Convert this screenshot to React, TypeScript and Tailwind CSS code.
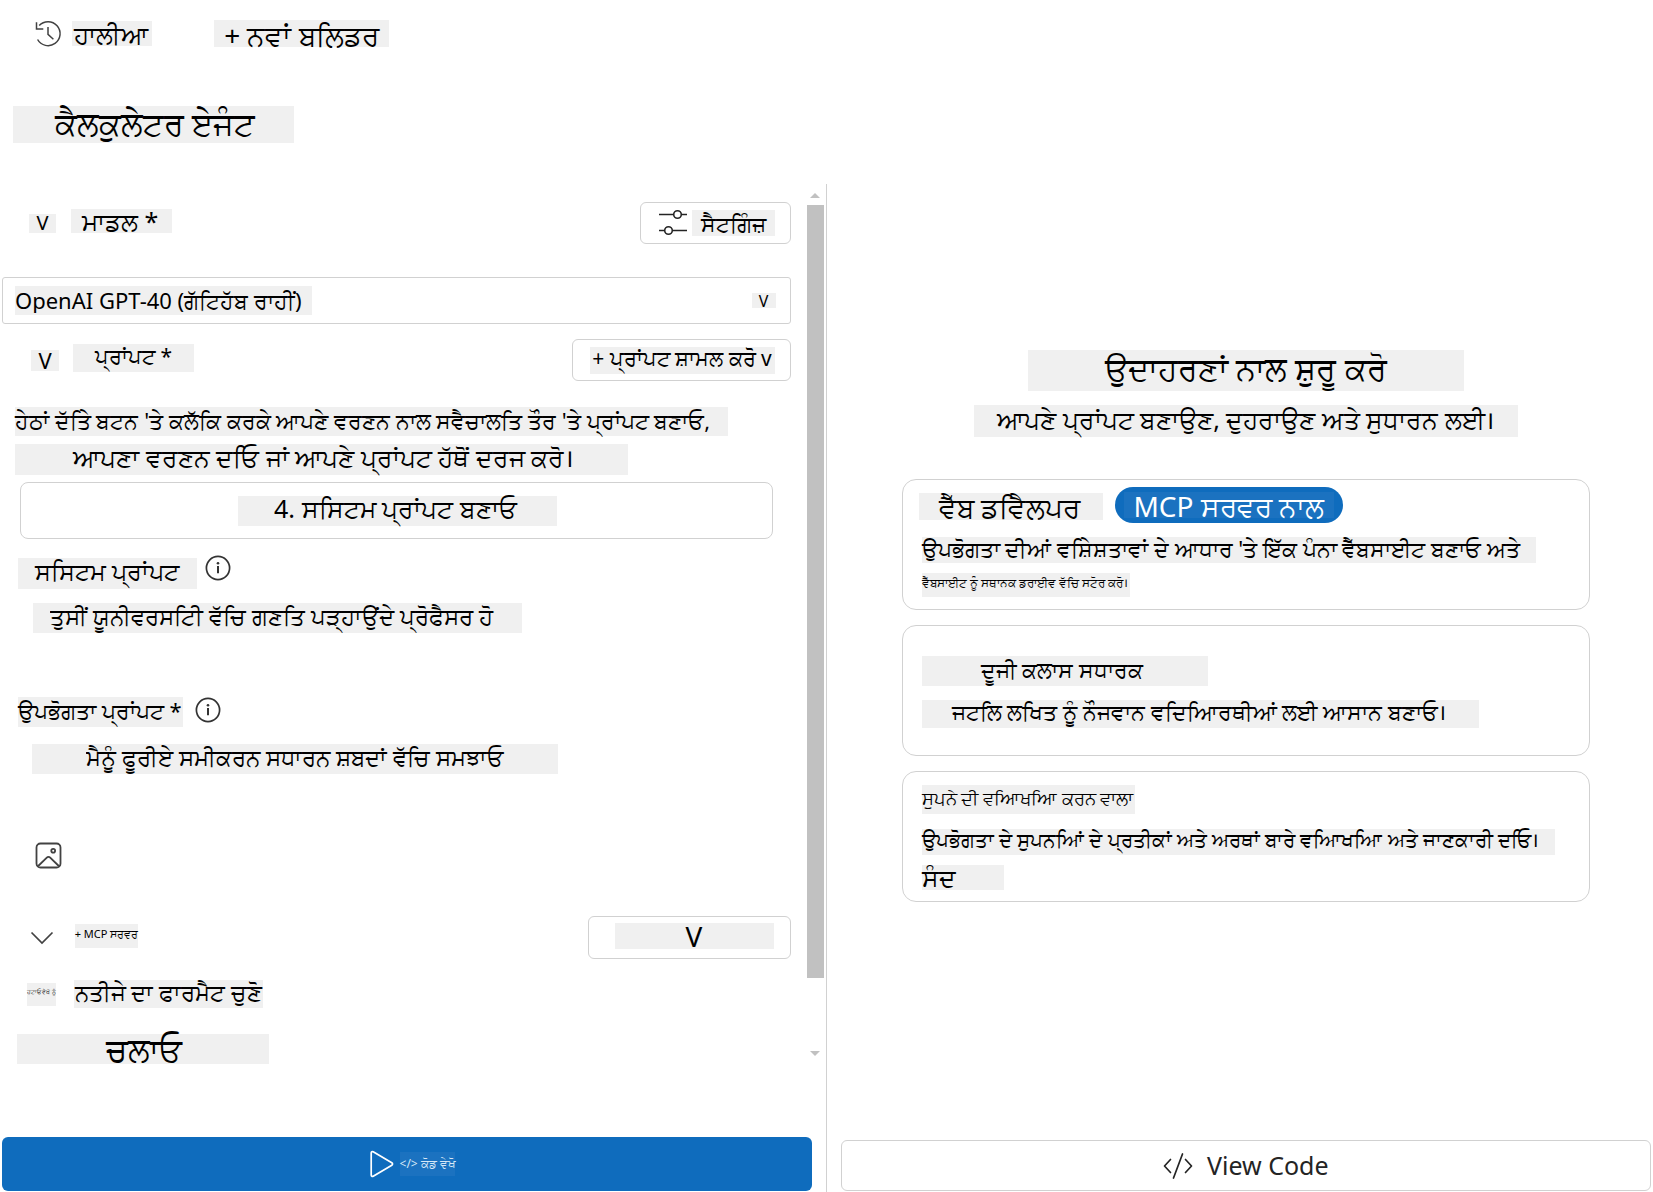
import type { ReactNode } from 'react';

function Chip({ className = '', children }: { className?: string; children: ReactNode }) {
  return (
    <span className={`flex shrink-0 items-center whitespace-nowrap bg-[#f0f0f0] pb-1 leading-none ${className}`}>
      {children}
    </span>
  );
}

function HistoryIcon() {
  return (
    <svg className="h-7 w-7 shrink-0" viewBox="0 0 28 28" fill="none" stroke="#424242" strokeWidth="1.5" aria-hidden="true">
      <path d="M5.200 5.600A12 12 0 1 1 3.600 19.500" />
      <path d="M2.500 2.200v6.800h6.800" />
      <path d="M14 7v7.400l5.400 4.800" />
    </svg>
  );
}

function SlidersIcon() {
  return (
    <svg className="h-7 w-7 shrink-0" viewBox="0 0 28 28" fill="none" stroke="#242424" strokeWidth="1.6" aria-hidden="true">
      <path d="M0 5.5h14.5M22.5 5.5H28M0 21.5h5.5M13.5 21.5H28" />
      <circle cx="18.5" cy="5.5" r="3.8" />
      <circle cx="9.5" cy="21.5" r="3.8" />
    </svg>
  );
}

function InfoIcon() {
  return (
    <svg className="h-[26px] w-[26px] shrink-0" viewBox="0 0 26 26" fill="none" stroke="#333" strokeWidth="1.7" aria-hidden="true">
      <circle cx="13" cy="13" r="11.6" />
      <path d="M13 11v7.200" strokeWidth="2" />
      <circle cx="13" cy="8.2" r="1.3" fill="#333" stroke="none" />
    </svg>
  );
}

function ImageIcon() {
  return (
    <svg className="h-[27px] w-[27px]" viewBox="0 0 27 27" fill="none" stroke="#424242" strokeWidth="1.8" aria-hidden="true">
      <rect x="1.5" y="1.5" width="24" height="24" rx="4" />
      <path d="M3.2 24l8.6-8.4a2.4 2.4 0 0 1 3.4 0l8.6 8.4" />
      <circle cx="18.2" cy="8.8" r="1.9" />
    </svg>
  );
}

function PlayIcon() {
  return (
    <svg className="h-7 w-6 shrink-0" viewBox="0 0 24 28" fill="none" stroke="#fff" strokeWidth="1.7" strokeLinejoin="round" aria-hidden="true">
      <path d="M1.2 3v22c0 1.2 1 1.8 2 1.2l18.6-11c1-.6 1-1.8 0-2.400L3.200 1.800c-1-.6-2 0-2 1.200z" />
    </svg>
  );
}

function CodeIcon() {
  return (
    <svg className="h-7 w-[30px] shrink-0" viewBox="0 0 30 28" fill="none" stroke="#242424" strokeWidth="1.7" strokeLinecap="round" strokeLinejoin="round" aria-hidden="true">
      <path d="M7.500 7.500L1.500 14l6 6.500M22.500 7.500l6 6.500-6 6.500M19.500 2l-9 24" />
    </svg>
  );
}

function Scrollbar() {
  return (
    <div className="mt-[9px] flex h-[863px] w-[17px] shrink-0 flex-col items-center" aria-hidden="true">
      <svg className="h-[5px] w-[10px]" viewBox="0 0 10 5" fill="#c1c1c1"><path d="M0 5l5-5 5 5z" /></svg>
      <div className="mt-[7px] h-[773px] w-full bg-[#c1c1c1]" />
      <svg className="mt-auto h-[5px] w-[10px]" viewBox="0 0 10 5" fill="#c1c1c1"><path d="M0 0l5 5 5-5z" /></svg>
    </div>
  );
}

function ExampleCard({ children }: { children: ReactNode }) {
  return <article className="h-[131px] rounded-[14px] border border-[#d1d1d1] px-[19px]">{children}</article>;
}

function BuilderForm() {
  return (
    <form className="min-w-0 flex-1" onSubmit={(e) => e.preventDefault()}>
      <div className="mt-[18px] flex h-[42px] items-center">
        <button type="button" className="ml-[27px]"><Chip className="h-[19px] w-[27px] justify-center pt-1 text-xl">V</Chip></button>
        <label htmlFor="model" className="ml-[15px]"><Chip className="mb-1 h-6 w-[101px] pt-1 pl-[11px] text-[25px]">ਮਾਡਲ *</Chip></label>
        <button type="button" className="ml-auto flex h-[42px] w-[151px] items-center rounded-md border border-[#d1d1d1] pl-[18px]">
          <SlidersIcon />
          <Chip className="ml-[5px] h-[26px] w-[83px] justify-center pt-1 text-[22px]">ਸੈਟਗਿੰਜ਼</Chip>
        </button>
      </div>

      <div className="mt-[33px] flex h-[47px] items-center rounded-[3px] border border-[#d1d1d1] pr-[14px] pl-3">
        <select id="model" className="h-[29px] w-[297px] appearance-none bg-[#f0f0f0] pb-0.5 text-[22px] leading-7">
          <option>OpenAI GPT-40 (ਗੱਟਿਹੱਬ ਰਾਹੀਂ)</option>
        </select>
        <Chip className="ml-auto h-[15px] w-6 justify-center pt-1 text-base">V</Chip>
      </div>

      <div className="mt-[15px] flex h-[42px] items-center">
        <button type="button" className="ml-[29px]"><Chip className="h-[21px] w-7 justify-center pt-1 text-[22px]">V</Chip></button>
        <Chip className="mb-1 ml-[14px] h-7 w-[121px] pl-[22px] text-[21px]">ਪ੍ਰਾਂਪਟ *</Chip>
        <button type="button" className="ml-auto flex h-[42px] w-[219px] items-center rounded-md border border-[#d1d1d1] pl-[17px]">
          <Chip className="h-[27px] w-[185px] justify-center text-[21px]">+ ਪ੍ਰਾਂਪਟ ਸ਼ਾਮਲ ਕਰੋ v</Chip>
        </button>
      </div>

      <p className="mt-[26px] ml-[13px]">
        <Chip className="h-[29px] w-[713px] text-[22px]">ਹੇਠਾਂ ਦੱਤੇਿ ਬਟਨ 'ਤੇ ਕਲੱਕਿ ਕਰਕੇ ਆਪਣੇ ਵਰਣਨ ਨਾਲ ਸਵੈਚਾਲਤਿ ਤੌਰ 'ਤੇ ਪ੍ਰਾਂਪਟ ਬਣਾਓ,</Chip>
        <Chip className="mt-2 h-[31px] w-[613px] pl-[58px] text-[25px]">ਆਪਣਾ ਵਰਣਨ ਦਓਿ ਜਾਂ ਆਪਣੇ ਪ੍ਰਾਂਪਟ ਹੱਥੋਂ ਦਰਜ ਕਰੋ।</Chip>
      </p>

      <button type="button" className="mt-[7px] ml-[18px] flex h-[57px] w-[753px] items-center justify-center rounded-lg border border-[#d1d1d1]">
        <Chip className="ml-0.5 h-[30px] w-[319px] pl-9 text-[25px]">4. ਸਸਿਟਮ ਪ੍ਰਾਂਪਟ ਬਣਾਓ</Chip>
      </button>

      <div className="mt-4 ml-4 flex h-[34px]">
        <label htmlFor="system"><Chip className="mt-[3px] h-[31px] w-[179px] pb-1.5 pl-[17px] text-2xl">ਸਸਿਟਮ ਪ੍ਰਾਂਪਟ</Chip></label>
        <button type="button" aria-label="info" className="ml-2 h-[26px]"><InfoIcon /></button>
      </div>
      <input id="system" className="mt-[14px] ml-[31px] block h-[30px] w-[489px] bg-[#f0f0f0] pb-1 pl-[17px] text-[23px] outline-none" defaultValue="ਤੁਸੀਂ ਯੂਨੀਵਰਸਟਿੀ ਵੱਚਿ ਗਣਤਿ ਪੜ੍ਹਾਉਂਦੇ ਪ੍ਰੋਫੈਸਰ ਹੋ" />

      <div className="mt-16 ml-4 flex h-[30px]">
        <label htmlFor="user"><Chip className="h-[30px] w-[165px] text-[22px]">ਉਪਭੋਗਤਾ ਪ੍ਰਾਂਪਟ *</Chip></label>
        <button type="button" aria-label="info" className="ml-3 h-[26px]"><InfoIcon /></button>
      </div>
      <input id="user" className="mt-[17px] ml-[30px] block h-[30px] w-[526px] bg-[#f0f0f0] pb-1 pl-[54px] text-[23px] outline-none" defaultValue="ਮੈਨੂੰ ਫੂਰੀਏ ਸਮੀਕਰਨ ਸਧਾਰਨ ਸ਼ਬਦਾਂ ਵੱਚਿ ਸਮਝਾਓ" />

      <button type="button" aria-label="image" className="mt-[68px] ml-[33px] block h-[27px]"><ImageIcon /></button>

      <div className="mt-[47px] flex h-[43px] items-center">
        <button type="button" aria-label="MCP" className="ml-[28px]">
          <svg className="h-[14px] w-6" viewBox="0 0 24 14" fill="none" stroke="#424242" strokeWidth="1.7" aria-hidden="true"><path d="M1.500 1.500L12 12 22.500 1.500" /></svg>
        </button>
        <Chip className="mb-1 ml-[21px] h-6 w-[63px] justify-center pb-0.5 text-[11px]">+ MCP ਸਰਵਰ</Chip>
        <button type="button" className="ml-auto flex h-[43px] w-[203px] items-center rounded-md border border-[#d1d1d1] pl-[26px]">
          <Chip className="mb-1 h-[26px] w-[159px] justify-center pt-1 text-[28px]">V</Chip>
        </button>
      </div>

      <div className="mt-[21px] flex h-7 items-center">
        <Chip className="ml-[25px] h-[23px] w-[29px] justify-center text-[6px]">ਹਟਾਓ ਵੇਖੋ ਨੂੰ</Chip>
        <Chip className="ml-[18px] h-7 w-[189px] justify-center text-[23px]">ਨਤੀਜੇ ਦਾ ਫਾਰਮੈਟ ਚੁਣੋ</Chip>
      </div>
      <Chip className="mt-[26px] ml-[15px] h-[30px] w-[252px] pt-1 pl-[89px] text-[32px]">ਚਲਾਓ</Chip>
    </form>
  );
}

export default function App() {
  return (
    <div className="flex min-h-screen flex-col bg-white font-['Noto_Sans','Open_Sans',sans-serif] text-black">
      <header className="h-[184px] pt-5">
        <nav className="flex h-[27px] items-center pl-[34px]">
          <button type="button" className="flex items-center">
            <HistoryIcon />
            <Chip className="ml-[10px] h-[25px] w-20 pt-1.5 pl-0.5 text-[25px]">ਹਾਲੀਆ</Chip>
          </button>
          <button type="button" className="ml-[62px]"><Chip className="h-[27px] w-[175px] justify-center pt-1.5 text-[28px]">+ ਨਵਾਂ ਬਲਿਡਰ</Chip></button>
        </nav>
        <h1 className="mt-[59px] ml-[13px] flex"><Chip className="h-[37px] w-[281px] pl-[42px] text-[32px]">ਕੈਲਕੁਲੇਟਰ ਏਜੰਟ</Chip></h1>
      </header>

      <main className="grid flex-1 grid-cols-2">
        <section className="flex flex-col border-r border-[#d1d1d1] pb-px pl-0.5">
          <div className="flex gap-4 pr-0.5">
            <BuilderForm />
            <Scrollbar />
          </div>
          <button type="button" className="mt-auto mr-[14px] flex h-[54px] items-center justify-center rounded-md bg-[#0f6cbd] pl-3 text-white">
            <PlayIcon />
            <span className="ml-1.5 flex h-6 w-[55px] items-center justify-center bg-[#1b72c0] text-xs leading-none whitespace-nowrap text-[#d6e8f7]">&lt;/&gt; ਕੋਡ ਵੇਖੋ</span>
          </button>
        </section>

        <section className="flex flex-col pr-0.5 pb-px pl-[14px]">
          <div className="mx-auto mt-[166px] w-full max-w-[688px]">
            <h2 className="flex justify-center"><Chip className="h-[41px] w-[436px] justify-center pb-1.5 text-[32px]">ਉਦਾਹਰਣਾਂ ਨਾਲ ਸ਼ੁਰੂ ਕਰੋ</Chip></h2>
            <p className="mt-[14px] flex justify-center"><Chip className="h-8 w-[544px] justify-center text-[25px]">ਆਪਣੇ ਪ੍ਰਾਂਪਟ ਬਣਾਉਣ, ਦੁਹਰਾਉਣ ਅਤੇ ਸੁਧਾਰਨ ਲਈ।</Chip></p>
            <div className="mt-[42px] flex flex-col gap-[15px]">
              <ExampleCard>
                <div className="mt-[7px] flex h-9 items-center">
                  <Chip className="mt-0.5 -ml-[3px] h-[27px] w-[184px] pt-1.5 pl-5 text-[28px]">ਵੈੱਬ ਡਵੈਿਲਪਰ</Chip>
                  <span className="ml-3 flex h-9 w-[228px] items-center justify-center rounded-full bg-[#0f6cbd]">
                    <span className="flex h-[26px] w-[210px] items-center justify-center bg-[#1b72c0] pt-0.5 text-[28px] leading-none whitespace-nowrap text-white">MCP ਸਰਵਰ ਨਾਲ</span>
                  </span>
                </div>
                <Chip className="mt-[14px] h-[26px] w-[614px] text-[22px]">ਉਪਭੋਗਤਾ ਦੀਆਂ ਵਸ਼ਿੇਸ਼ਤਾਵਾਂ ਦੇ ਆਧਾਰ 'ਤੇ ਇੱਕ ਪੰਨਾ ਵੈੱਬਸਾਈਟ ਬਣਾਓ ਅਤੇ</Chip>
                <Chip className="mt-[10px] h-6 w-[208px] pb-0.5 text-xs">ਵੈੱਬਸਾਈਟ ਨੂੰ ਸਥਾਨਕ ਡਰਾਈਵ ਵੱਚਿ ਸਟੋਰ ਕਰੋ।</Chip>
              </ExampleCard>
              <ExampleCard>
                <Chip className="mt-[30px] h-[30px] w-[286px] pl-[59px] text-[22px]">ਦੂਜੀ ਕਲਾਸ ਸਧਾਰਕ</Chip>
                <Chip className="mt-[14px] h-7 w-[557px] pb-1.5 pl-[30px] text-[22px]">ਜਟਲਿ ਲਖਿਤ ਨੂੰ ਨੌਜਵਾਨ ਵਦਿਆਿਰਥੀਆਂ ਲਈ ਆਸਾਨ ਬਣਾਓ।</Chip>
              </ExampleCard>
              <ExampleCard>
                <Chip className="mt-[13px] h-[29px] w-[213px] text-lg">ਸੁਪਨੇ ਦੀ ਵਆਿਖਆਿ ਕਰਨ ਵਾਲਾ</Chip>
                <Chip className="mt-[15px] h-[26px] w-[633px] text-xl">ਉਪਭੋਗਤਾ ਦੇ ਸੁਪਨਆਿਂ ਦੇ ਪ੍ਰਤੀਕਾਂ ਅਤੇ ਅਰਥਾਂ ਬਾਰੇ ਵਆਿਖਆਿ ਅਤੇ ਜਾਣਕਾਰੀ ਦਓਿ।</Chip>
                <Chip className="mt-[10px] h-[25px] w-[82px] pt-1 text-[25px]">ਸੰਦ</Chip>
              </ExampleCard>
            </div>
          </div>
          <button type="button" className="mt-auto flex h-[51px] items-center justify-center gap-[14px] rounded-md border border-[#d1d1d1] text-[#242424]">
            <CodeIcon />
            <span className="text-[25px] leading-none">View Code</span>
          </button>
        </section>
      </main>
    </div>
  );
}
